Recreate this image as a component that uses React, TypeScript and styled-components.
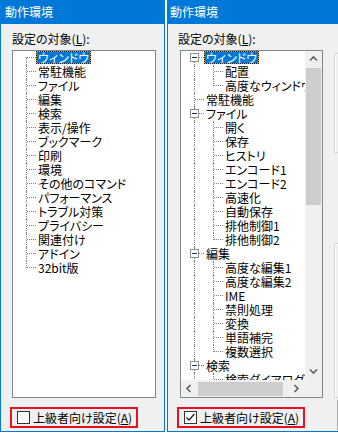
import React from "react";
import styled, { createGlobalStyle, css } from "styled-components";

type TreeNode = { label: string; children?: TreeNode[] };

type FlatRow = {
  label: string;
  depth: number;
  guides: boolean[];
  first: boolean;
  last: boolean;
  expandable: boolean;
};

const leftTree: TreeNode[] = [
  { label: "ウィンドウ" },
  { label: "常駐機能" },
  { label: "ファイル" },
  { label: "編集" },
  { label: "検索" },
  { label: "表示/操作" },
  { label: "ブックマーク" },
  { label: "印刷" },
  { label: "環境" },
  { label: "その他のコマンド" },
  { label: "パフォーマンス" },
  { label: "トラブル対策" },
  { label: "プライバシー" },
  { label: "関連付け" },
  { label: "アドイン" },
  { label: "32bit版" },
];

const rightTree: TreeNode[] = [
  { label: "ウィンドウ", children: [{ label: "配置" }, { label: "高度なウィンドウ" }] },
  { label: "常駐機能" },
  {
    label: "ファイル",
    children: [
      { label: "開く" },
      { label: "保存" },
      { label: "ヒストリ" },
      { label: "エンコード1" },
      { label: "エンコード2" },
      { label: "高速化" },
      { label: "自動保存" },
      { label: "排他制御1" },
      { label: "排他制御2" },
    ],
  },
  {
    label: "編集",
    children: [
      { label: "高度な編集1" },
      { label: "高度な編集2" },
      { label: "IME" },
      { label: "禁則処理" },
      { label: "変換" },
      { label: "単語補完" },
      { label: "複数選択" },
    ],
  },
  { label: "検索", children: [{ label: "検索ダイアログ" }, { label: "検索オプション" }] },
  { label: "表示/操作" },
];

function flatten(nodes: TreeNode[], depth = 0, guides: boolean[] = []): FlatRow[] {
  return nodes.flatMap((n, i) => {
    const last = i === nodes.length - 1;
    const row: FlatRow = {
      label: n.label,
      depth,
      guides,
      first: depth === 0 && i === 0,
      last,
      expandable: !!n.children,
    };
    const kids = n.children ? flatten(n.children, depth + 1, [...guides, !last]) : [];
    return [row, ...kids];
  });
}

const GlobalStyle = createGlobalStyle`
  html, body {
    margin: 0;
    padding: 0;
    background: #fff;
    overflow: hidden;
  }
  body {
    font-family: "Noto Sans CJK JP", "Noto Sans", sans-serif;
    font-size: 12px;
    font-feature-settings: "palt";
    color: #000;
  }
`;

const Screen = styled.div`
  display: flex;
  align-items: flex-start;
  gap: 2px;
  width: 338px;
  height: 433px;
  overflow: hidden;
`;

const Window = styled.div<{ $width: number }>`
  flex-shrink: 0;
  width: ${(p) => p.$width}px;
  height: 432px;
  box-sizing: border-box;
  border: 1px solid #0078d7;
  border-top: 0;
  background: #f0f0f0;
  display: flex;
  flex-direction: column;
`;

const TitleBar = styled.div<{ $pad: number }>`
  height: 24px;
  margin: 0 -1px;
  padding-left: ${(p) => p.$pad}px;
  background: #0078d7;
  color: #fff;
  line-height: 24px;
  font-size: 12px;
`;

const Body = styled.div`
  flex: 1;
  display: flex;
`;

const MainColumn = styled.div`
  display: flex;
  flex-direction: column;
`;

const FieldLabel = styled.div<{ $pad: number }>`
  height: 14px;
  line-height: 14px;
  margin: 8px 0 4px;
  padding-left: ${(p) => p.$pad}px;
  white-space: nowrap;
`;

const TreeBox = styled.div<{ $left: number; $width: number }>`
  margin-left: ${(p) => p.$left}px;
  width: ${(p) => p.$width}px;
  height: 348px;
  box-sizing: border-box;
  border: 1px solid #828790;
  background: #fff;
  overflow: hidden;
`;

const ScrollGrid = styled.div`
  display: grid;
  grid-template-columns: 1fr 17px;
  grid-template-rows: 1fr 17px;
  height: 100%;
`;

const TreeContent = styled.div`
  overflow: hidden;
  min-width: 0;
`;

const Row = styled.div`
  display: flex;
  align-items: flex-start;
  height: 14px;
  padding-left: 4px;
  white-space: nowrap;
`;

type LineMode = "none" | "full" | "down" | "up";

const Cell = styled.span<{ $line: LineMode; $branch?: boolean }>`
  position: relative;
  flex-shrink: 0;
  width: 19px;
  height: 14px;

  &::before {
    content: "";
    position: absolute;
    left: 9px;
    border-left: 1px dotted #808080;
    ${(p) =>
      p.$line === "none"
        ? css`display: none;`
        : p.$line === "full"
        ? css`top: 0; bottom: 0;`
        : p.$line === "down"
        ? css`top: 6px; bottom: 0;`
        : css`top: 0; height: 7px;`}
  }

  ${(p) =>
    p.$branch &&
    css`
      &::after {
        content: "";
        position: absolute;
        top: 6px;
        left: 10px;
        width: 9px;
        border-top: 1px dotted #808080;
      }
    `}
`;

const Expander = styled.svg`
  position: absolute;
  left: 5px;
  top: 2px;
  z-index: 1;
`;

const NodeLabel = styled.span<{ $selected?: boolean }>`
  height: 13px;
  box-sizing: border-box;
  line-height: 11px;
  padding: 0 1px;
  border: 1px solid transparent;
  ${(p) =>
    p.$selected &&
    css`
      background: #0078d7;
      color: #fff;
      border-color: #e9a33a;
      outline: 1px dotted #1a1a1a;
      outline-offset: -1px;
    `}
`;

const VScroll = styled.div`
  display: flex;
  flex-direction: column;
  background: #f0f0f0;
`;

const HScroll = styled.div`
  display: flex;
  background: #f0f0f0;
`;

const Corner = styled.div`
  background: #f0f0f0;
`;

const ArrowButton = styled.div`
  flex-shrink: 0;
  width: 17px;
  height: 17px;
  display: flex;
  align-items: center;
  justify-content: center;
`;

const Thumb = styled.div<{ $vertical?: boolean; $size: number }>`
  flex-shrink: 0;
  background: #cdcdcd;
  ${(p) =>
    p.$vertical
      ? css`height: ${p.$size}px; margin: 0 1px;`
      : css`width: ${p.$size}px; margin: 2px 0 1px;`}
`;

const Track = styled.div`
  flex: 1;
`;

const RedFrame = styled.div`
  display: flex;
  align-items: center;
  gap: 3px;
  width: 128px;
  height: 21px;
  box-sizing: border-box;
  margin: 9px 0 0 9px;
  padding-left: 5px;
  border: 2px solid #e81123;
  white-space: nowrap;
`;

const CheckBox = styled.span`
  flex-shrink: 0;
  width: 13px;
  height: 13px;
  box-sizing: border-box;
  border: 1px solid #333;
  background: #fff;
  display: flex;
  align-items: center;
  justify-content: center;
`;

const SidePane = styled.div`
  display: flex;
  flex-direction: column;
  margin-left: 11px;
`;

const GroupFrame = styled.div<{ $top: number; $height: number }>`
  margin-top: ${(p) => p.$top}px;
  width: 60px;
  height: ${(p) => p.$height}px;
  box-sizing: border-box;
  border: 1px solid #d5d5d5;
  box-shadow: inset 1px 1px 0 #fff;
`;

const ButtonEdge = styled.div`
  margin: 2px 0 0 3px;
  width: 60px;
  height: 30px;
  box-sizing: border-box;
  border: 1px solid #adadad;
  background: #e1e1e1;
`;

const Chevron = ({ dir }: { dir: "up" | "down" | "left" | "right" }) => {
  const pts =
    dir === "up"
      ? "1,5.5 4.5,2 8,5.5"
      : dir === "down"
      ? "1,2.5 4.5,6 8,2.5"
      : dir === "left"
      ? "5.5,1 2,4.5 5.5,8"
      : "2.5,1 6,4.5 2.5,8";
  return (
    <svg width="9" height="9" viewBox="0 0 9 9">
      <polyline points={pts} fill="none" stroke="#606060" strokeWidth="1.6" />
    </svg>
  );
};

function TreeRows({ rows }: { rows: FlatRow[] }) {
  return (
    <>
      {rows.map((r, idx) => {
        const mode: LineMode =
          r.first && r.last ? "none" : r.first ? "down" : r.last ? "up" : "full";
        return (
          <Row key={idx}>
            {r.guides.map((g, i) => (
              <Cell key={i} $line={g ? "full" : "none"} />
            ))}
            <Cell $line={mode} $branch>
              {r.expandable && (
                <Expander width="9" height="9" viewBox="0 0 9 9">
                  <rect x="0.5" y="0.5" width="8" height="8" fill="#fff" stroke="#919191" />
                  <line x1="2" y1="4.5" x2="7" y2="4.5" stroke="#1e2c6e" />
                </Expander>
              )}
            </Cell>
            <NodeLabel $selected={idx === 0}>{r.label}</NodeLabel>
          </Row>
        );
      })}
    </>
  );
}

function AdvancedCheck({ checked }: { checked?: boolean }) {
  return (
    <RedFrame>
      <CheckBox>
        {checked && (
          <svg width="11" height="11" viewBox="0 0 11 11">
            <polyline points="1.5,5.5 4,8 9.5,2" fill="none" stroke="#222" strokeWidth="1.3" />
          </svg>
        )}
      </CheckBox>
      <span>
        上級者向け設定(<u>A</u>)
      </span>
    </RedFrame>
  );
}

export default function App() {
  const leftRows = flatten(leftTree);
  const rightRows = flatten(rightTree);

  return (
    <>
      <GlobalStyle />
      <Screen>
        <Window $width={165}>
          <TitleBar $pad={5}>動作環境</TitleBar>
          <Body>
            <MainColumn>
              <FieldLabel $pad={11}>
                設定の対象(<u>L</u>):
              </FieldLabel>
              <TreeBox $left={11} $width={144}>
                <TreeRows rows={leftRows} />
              </TreeBox>
              <AdvancedCheck />
            </MainColumn>
          </Body>
        </Window>

        <Window $width={240}>
          <TitleBar $pad={3}>動作環境</TitleBar>
          <Body>
            <MainColumn>
              <FieldLabel $pad={10}>
                設定の対象(<u>L</u>):
              </FieldLabel>
              <TreeBox $left={12} $width={143}>
                <ScrollGrid>
                  <TreeContent>
                    <TreeRows rows={rightRows} />
                  </TreeContent>
                  <VScroll>
                    <ArrowButton>
                      <Chevron dir="up" />
                    </ArrowButton>
                    <Thumb $vertical $size={137} />
                    <Track />
                    <ArrowButton>
                      <Chevron dir="down" />
                    </ArrowButton>
                  </VScroll>
                  <HScroll>
                    <ArrowButton>
                      <Chevron dir="left" />
                    </ArrowButton>
                    <Thumb $size={85} />
                    <Track />
                    <ArrowButton>
                      <Chevron dir="right" />
                    </ArrowButton>
                  </HScroll>
                  <Corner />
                </ScrollGrid>
              </TreeBox>
              <AdvancedCheck checked />
            </MainColumn>
            <SidePane>
              <GroupFrame $top={29} $height={100} />
              <GroupFrame $top={90} $height={155} />
              <ButtonEdge />
            </SidePane>
          </Body>
        </Window>
      </Screen>
    </>
  );
}
